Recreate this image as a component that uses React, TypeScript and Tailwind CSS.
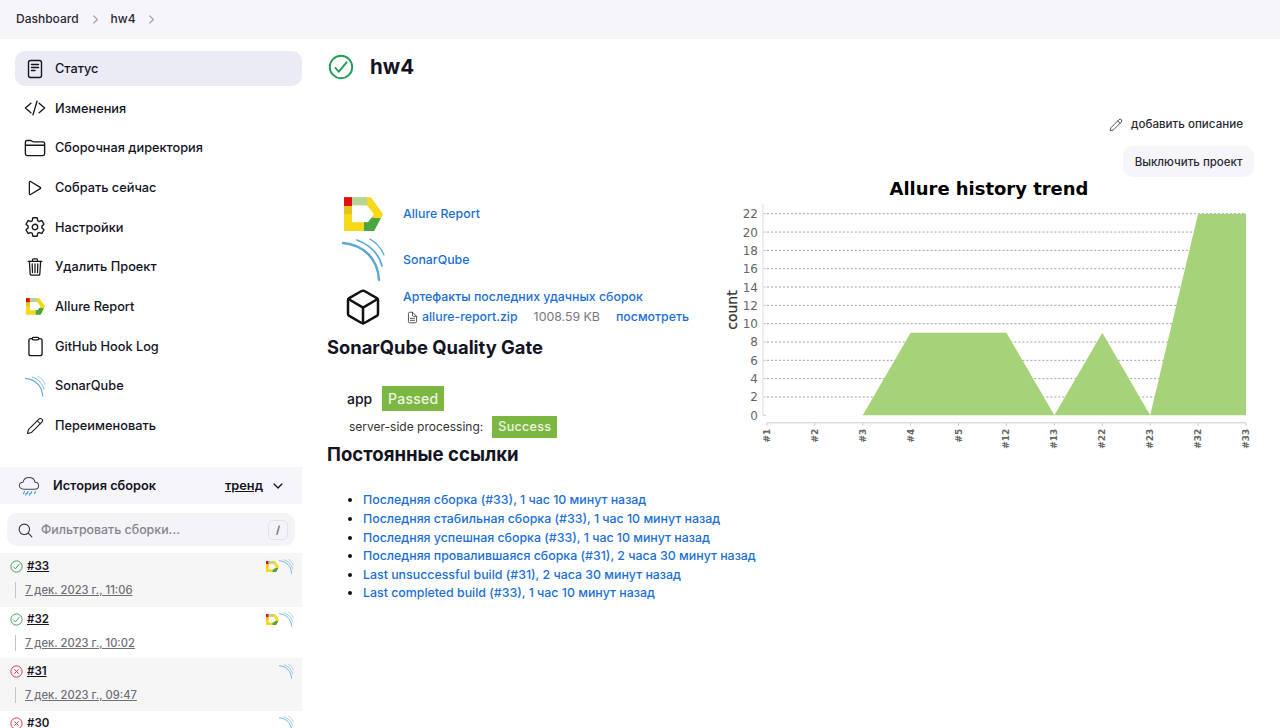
import React from 'react';
import { Pencil } from 'lucide-react';
import {
  IoCodeSlashOutline,
  IoFolderOutline,
  IoPlayOutline,
  IoSettingsOutline,
  IoTrashOutline,
  IoClipboardOutline,
  IoCubeOutline,
  IoCheckmarkCircleOutline,
  IoCloseCircleOutline,
  IoSearchOutline,
  IoChevronForward,
  IoChevronDown,
  IoDocumentTextOutline,
} from 'react-icons/io5';

const AllureLogo = ({ size }: { size: number }) => (
  <svg width={size} height={size * 0.88} viewBox="0 0 39 34">
    <path fillRule="evenodd" d="M0 0 H27 L39 17 L30 34 H0 Z M8 8 V25 H24 L30 17 L23 8 Z" fill="#f7d917" />
    <rect x="0" y="0" width="8" height="9" fill="#e01010" />
    <rect x="8" y="0" width="15" height="8" fill="#b5d49a" />
    <rect x="0" y="9" width="8" height="8" fill="#e3c51c" />
    <path d="M20 25 H24 L27.5 20.5 L36.8 21 L30 34 H20 Z" fill="#4aa645" />
  </svg>
);

const SonarLogo = ({ size }: { size: number }) => (
  <svg width={size} height={size} viewBox="0 0 44 44" fill="none" stroke="#5ba7d6" strokeLinecap="round">
    <path d="M1 5 C22 7 36 21 37 42" strokeWidth="2.4" />
    <path d="M15 2 C28 7 37 16 40 28" strokeWidth="1.7" />
    <path d="M28 1 C35 5 39 10 42 17" strokeWidth="1.3" />
  </svg>
);

const StatusIcon = () => (
  <svg width="22" height="22" viewBox="0 0 22 22" fill="none" stroke="#17171f" strokeWidth="1.4" strokeLinecap="round">
    <rect x="4.5" y="2.5" width="13" height="17" rx="2" />
    <path d="M7.5 6.5 H14.5 M7.5 9.5 H14.5 M7.5 12.5 H11" />
  </svg>
);

const CloudRainIcon = () => (
  <svg width="22" height="22" viewBox="0 0 24 24" fill="none" strokeLinecap="round">
    <path
      d="M6.5 15.5 C3.5 15.5 1.5 13.8 1.5 11.6 C1.5 9.5 3.2 8 5.4 8 C6 4.8 8.8 2.6 12 2.6 C15.6 2.6 18.2 5 18.6 8 C20.8 8 22.5 9.6 22.5 11.7 C22.5 13.9 20.6 15.5 18 15.5 Z"
      stroke="#44444a"
      strokeWidth="1.1"
    />
    <path d="M7 18 L6 20.5 M11 18 L10 20.5 M15 18 L14 20.5 M19 18 L18 20.5 M9 20 L8.4 22 M13 20 L12.4 22" stroke="#4a9bd8" strokeWidth="1.2" />
  </svg>
);

const menu: { label: string; icon: React.ReactNode }[] = [
  { label: 'Статус', icon: <StatusIcon /> },
  { label: 'Изменения', icon: <IoCodeSlashOutline size={22} /> },
  { label: 'Сборочная директория', icon: <IoFolderOutline size={22} /> },
  { label: 'Собрать сейчас', icon: <IoPlayOutline size={20} /> },
  { label: 'Настройки', icon: <IoSettingsOutline size={22} /> },
  { label: 'Удалить Проект', icon: <IoTrashOutline size={20} /> },
  { label: 'Allure Report', icon: <AllureLogo size={19} /> },
  { label: 'GitHub Hook Log', icon: <IoClipboardOutline size={21} /> },
  { label: 'SonarQube', icon: <SonarLogo size={21} /> },
  { label: 'Переименовать', icon: <Pencil size={18} strokeWidth={1.4} /> },
];

const builds = [
  { id: '#33', date: '7 дек. 2023 г., 11:06', ok: true, allure: true, shade: true, h: 'h-[54px] pt-[5px]', gap: 'mt-[7px]' },
  { id: '#32', date: '7 дек. 2023 г., 10:02', ok: true, allure: true, shade: false, h: 'h-[51px] pt-[4px]', gap: 'mt-[7px]' },
  { id: '#31', date: '7 дек. 2023 г., 09:47', ok: false, allure: false, shade: true, h: 'h-[53px] pt-[5px]', gap: 'mt-[7px]' },
  { id: '#30', date: '', ok: false, allure: false, shade: false, h: 'h-[17px] pt-[4px]', gap: '' },
];

const links = [
  'Последняя сборка (#33), 1 час 10 минут назад',
  'Последняя стабильная сборка (#33), 1 час 10 минут назад',
  'Последняя успешная сборка (#33), 1 час 10 минут назад',
  'Последняя провалившаяся сборка (#31), 2 часа 30 минут назад',
  'Last unsuccessful build (#31), 2 часа 30 минут назад',
  'Last completed build (#33), 1 час 10 минут назад',
];

const Chart = () => {
  const xLabels = ['#1', '#2', '#3', '#4', '#5', '#12', '#13', '#22', '#23', '#32', '#33'];
  const yTicks = [0, 2, 4, 6, 8, 10, 12, 14, 16, 18, 20, 22];
  const x0 = 42;
  const step = 48;
  const yZero = 238.5;
  const unit = 9.18;
  const px = (i: number) => x0 + i * step;
  const py = (v: number) => yZero - v * unit;
  const poly = (p: number[][]) => p.map(([i, v]) => `${px(i)},${py(v)}`).join(' ');
  return (
    <svg width="530" height="272" viewBox="0 0 530 272" className="block">
      <text x="264.5" y="18" textAnchor="middle" fontFamily="DejaVu Sans" fontWeight="700" fontSize="18" fill="#000">
        Allure history trend
      </text>
      {yTicks.map(v => (
        <g key={v}>
          {v > 0 && <line x1={x0} x2={x0 + 480} y1={py(v)} y2={py(v)} stroke="#a0a0a0" strokeWidth="1" strokeDasharray="2 2" />}
          <line x1={x0 - 4} x2={x0 - 1} y1={py(v)} y2={py(v)} stroke="#ccc" />
          <text x={x0 - 9} y={py(v) + 4.5} textAnchor="end" fontFamily="DejaVu Sans" fontSize="12" fill="#666">
            {v}
          </text>
        </g>
      ))}
      <line x1={x0 - 4} x2={x0 - 4} y1={27} y2={238} stroke="#ddd" />
      <polygon points={poly([[2, 0], [3, 9], [4, 9], [5, 9], [6, 0]])} fill="#a6d279" />
      <polygon points={poly([[6, 0], [7, 9], [8, 0]])} fill="#a6d279" />
      <polygon points={poly([[8, 0], [9, 22], [10, 22], [10, 0]])} fill="#a6d279" />
      <line x1={x0} x2={x0 + 480} y1={246} y2={246} stroke="#ccc" />
      {xLabels.map((l, i) => (
        <g key={l}>
          <line x1={px(i)} x2={px(i)} y1={246} y2={249} stroke="#ccc" />
          <text
            transform={`translate(${px(i) + 3} 252) rotate(-90)`}
            textAnchor="end"
            fontFamily="DejaVu Sans"
            fontWeight="700"
            fontSize="9"
            fill="#666"
          >
            {l}
          </text>
        </g>
      ))}
      <text transform="translate(12 133) rotate(-90)" textAnchor="middle" fontFamily="DejaVu Sans" fontSize="14" stroke="#333" strokeWidth="0.25" fill="#333">
        count
      </text>
    </svg>
  );
};

export default function App() {
  return (
    <div className="h-[728px] w-[1280px] overflow-hidden bg-white font-['Inter',sans-serif] text-[#14141f]">
      <div className="flex h-[39px] items-center bg-[#f6f6fa] pb-px pl-4 text-[12px] font-medium text-[#2a2a35]">
        <span>Dashboard</span>
        <IoChevronForward size={13} className="ml-[10px] mr-[9px] text-[#a0a0a8]" />
        <span>hw4</span>
        <IoChevronForward size={13} className="ml-[9px] text-[#a0a0a8]" />
      </div>

      <div className="flex">
        <aside className="w-[302px] shrink-0">
          <nav className="pl-[15px] pt-[12px]">
            {menu.map((item, i) => (
              <div
                key={item.label}
                className={`mb-[4.7px] flex h-[35px] items-center rounded-[10px] pl-[9px] text-[12.75px] font-medium ${
                  i === 0 ? 'bg-[#ebebf5]' : ''
                }`}
              >
                <span className="flex w-[22px] justify-center text-[#17171f]">{item.icon}</span>
                <span className="ml-[9px]">{item.label}</span>
              </div>
            ))}
          </nav>

          <div className="mt-[24px] flex h-[37px] items-center bg-[#f6f6fa] pl-[18px] pr-[17px] text-[12.75px] font-semibold">
            <CloudRainIcon />
            <span className="ml-[13px]">История сборок</span>
            <span className="ml-auto underline">тренд</span>
            <IoChevronDown size={14} className="ml-[8px]" />
          </div>

          <div className="mx-[7px] mt-[9px] flex h-[33px] items-center rounded-[10px] bg-[#f3f3f8] pl-[10px] pr-[7px] pt-px text-[12.4px] font-medium text-[#85858f]">
            <IoSearchOutline size={17} className="text-[#33333b]" />
            <span className="ml-[7px]">Фильтровать сборки...</span>
            <span className="ml-auto flex h-[20px] w-[20px] items-center justify-center rounded-[5px] border border-[#e2e2ea] text-[11px] text-[#55555f]">
              /
            </span>
          </div>

          <div className="mt-[7px]">
            {builds.map(b => (
              <div key={b.id} className={`pl-[9px] pr-[8px] ${b.h} ${b.shade ? 'bg-[#f6f6f7]' : 'bg-white'}`}>
                <div className="flex h-[17px] items-center">
                  {b.ok ? (
                    <IoCheckmarkCircleOutline size={15} className="text-[#3f9a5a]" />
                  ) : (
                    <IoCloseCircleOutline size={15} className="text-[#d0313f]" />
                  )}
                  <span className={`ml-[3px] text-[11.5px] font-semibold ${b.date ? 'underline' : ''}`}>{b.id}</span>
                  <span className="ml-auto flex items-center">
                    {b.allure && <AllureLogo size={13} />}
                    <SonarLogo size={15} />
                  </span>
                </div>
                {b.date && (
                  <div className={`ml-[6px] flex h-[16px] items-center border-l border-[#c5c5c5] pl-[9px] text-[11.2px] font-medium text-[#6f6f78] underline ${b.gap}`}>
                    {b.date}
                  </div>
                )}
              </div>
            ))}
          </div>
        </aside>

        <main className="min-w-0 flex-1 pl-[25px] pr-[26px]">
          <div className="flex items-center pt-[13px]">
            <IoCheckmarkCircleOutline size={30} className="-ml-px text-[#1f9d55]" />
            <h1 className="ml-[14px] text-[20.5px] font-bold leading-[28px]">hw4</h1>
          </div>

          <div className="mt-[34px] flex justify-end">
            <div className="flex items-center pr-[11px] text-[11.6px] font-medium text-[#2a2a35]">
              <Pencil size={14} strokeWidth={1.4} />
              <span className="ml-[8px]">добавить описание</span>
            </div>
          </div>
          <div className="mt-[13px] flex justify-end">
            <div className="flex h-[31px] items-center rounded-[10px] bg-[#f6f6fa] px-[11.5px] pt-px text-[11.5px] font-medium text-[#2a2a35]">
              Выключить проект
            </div>
          </div>

          <div className="flex">
            <div className="w-[398px] shrink-0">
              <div className="mt-[18px] flex h-[37px] items-center pl-[17px]">
                <AllureLogo size={39} />
                <a className="ml-[20px] text-[12.35px] font-medium text-[#1a6fd8]">Allure Report</a>
              </div>
              <div className="mt-[6px] flex h-[44px] items-center pl-[15px]">
                <SonarLogo size={44} />
                <a className="ml-[17px] text-[12.35px] font-medium text-[#1a6fd8]">SonarQube</a>
              </div>
              <div className="mt-[5px] flex pl-[16px]">
                <IoCubeOutline size={40} className="text-[#111]" />
                <div className="ml-[20px] text-[12.35px] font-medium">
                  <a className="block h-[20px] leading-[20px] text-[#1a6fd8]">Артефакты последних удачных сборок</a>
                  <div className="flex h-[20px] items-center">
                    <IoDocumentTextOutline size={13} className="ml-[3px] text-[#333]" />
                    <a className="ml-[3px] text-[#1a6fd8]">allure-report.zip</a>
                    <span className="ml-[16px] font-normal text-[#77777f]">1008.59 KB</span>
                    <a className="ml-[16px] text-[#1a6fd8]">посмотреть</a>
                  </div>
                </div>
              </div>
              <h2 className="mt-[8px] text-[18.35px] font-bold leading-[24px]">SonarQube Quality Gate</h2>
              <div className="mt-[27px] flex items-center pl-[20px]">
                <span className="text-[14px] font-medium">app</span>
                <span className="ml-[10px] flex h-[25px] w-[62px] items-center justify-center bg-[#7cb742] text-[14px] font-medium tracking-[0.3px] text-[#eef6e4]">
                  Passed
                </span>
              </div>
              <div className="mt-[5px] flex items-center pl-[22px]">
                <span className="text-[12px] text-[#333]">server-side processing:</span>
                <span className="ml-[9px] flex h-[22px] w-[65px] items-center justify-center bg-[#7cb742] text-[12.5px] font-medium tracking-[0.3px] text-[#eef6e4]">
                  Success
                </span>
              </div>
              <h2 className="mt-[4px] text-[18.6px] font-bold leading-[24px]">Постоянные ссылки</h2>
              <ul className="mt-[25px] list-disc pl-[36px] text-[12.37px] font-medium leading-[18.6px] text-[#1a6fd8] marker:text-[#111]">
                {links.map(l => (
                  <li key={l} className="whitespace-nowrap">{l}</li>
                ))}
              </ul>
            </div>
            <Chart />
          </div>
        </main>
      </div>
    </div>
  );
}
